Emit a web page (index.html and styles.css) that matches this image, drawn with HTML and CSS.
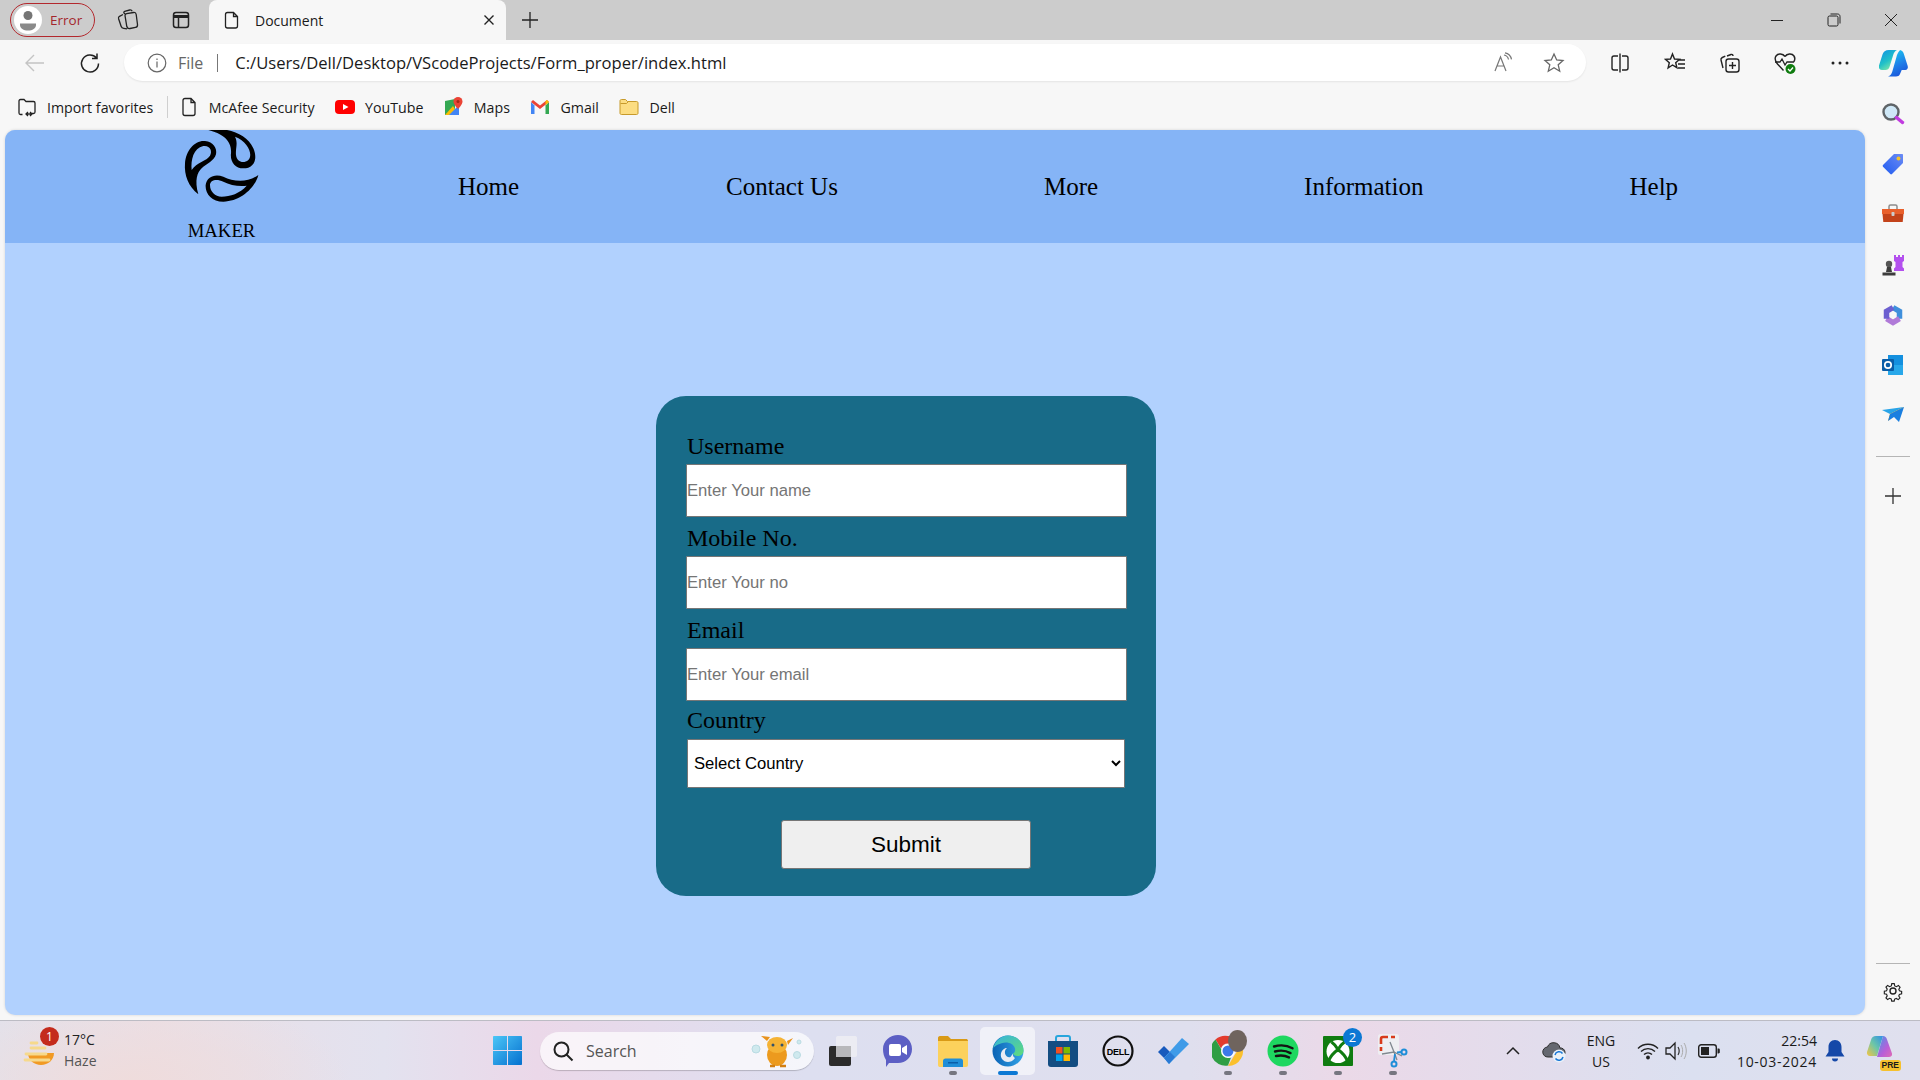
FILE: index.html
```html
<!DOCTYPE html>
<html lang="en">
<head>
  <meta charset="UTF-8" />
  <title>Document</title>
  <link rel="stylesheet" href="styles.css">
</head>
<body>

<div class="tabbar">
  <div class="profile">
    <span class="avatar">
      <svg width="24" height="24" viewBox="0 0 24 24"><circle cx="12" cy="7.500" r="4.500" fill="#757575"/><path d="M4 15.500h16v1.500c0 3.500-3.500 5.500-8 5.500s-8-2-8-5.500z" fill="#8a8a8a"/></svg>
    </span>
    <span>Error</span>
  </div>
  <div class="tab-btn first">
    <svg width="24" height="24" viewBox="0 0 24 24" fill="none" stroke="#222" stroke-width="1.300"><path d="M9 7.500c.1-1 .7-1.600 1.600-1.800l7-1.200c1.400-.2 2.400.6 2.600 2l1.300 10c.2 1.500-.7 2.600-2 2.800l-5.500 1.200c-1.500.3-2.800-.6-3.200-2z"/><path d="M9.200 6l-1-.8c-.8-.6-.3-1.600.5-1.900l5-1.300c1-.2 2 .1 2.500 1.200"/><path d="M7 6.500l-3.500 1.800c-.9.5-1.200 1.400-.9 2.400l2.500 7.500c.4 1.200 1.400 2 2.600 2.100l3.300.5"/></svg>
  </div>
  <div class="tab-btn">
    <svg width="20" height="20" viewBox="0 0 20 20" fill="none" stroke="#222" stroke-width="1.500"><rect x="2.500" y="2.500" width="15" height="15" rx="2.500"/><path d="M2.500 6.500h15" stroke-width="3"/><path d="M7.500 6.500v11"/></svg>
  </div>
  <div class="tab">
    <svg width="20" height="20" viewBox="0 0 20 20" fill="none" stroke="#222" stroke-width="1.300"><path d="M5.500 2.500h6l4 4v9.500c0 1.200-1 2-2 2h-8c-1 0-2-.8-2-2v-11.500c0-1.200 1-2 2-2zM11.500 2.500v4h4"/></svg>
    <span class="tab-title">Document</span>
    <svg class="tab-close" width="12" height="12" viewBox="0 0 12 12" stroke="#222" stroke-width="1.400"><path d="M1.500 1.500l9 9M10.500 1.500l-9 9"/></svg>
  </div>
  <div class="new-tab">
    <svg width="18" height="18" viewBox="0 0 18 18" stroke="#222" stroke-width="1.300"><path d="M9 1v16M1 9h16"/></svg>
  </div>
  <div class="win-controls">
    <div class="win-btn"><svg width="14" height="14" viewBox="0 0 14 14" stroke="#222"><path d="M1 7.500h12"/></svg></div>
    <div class="win-btn"><svg width="14" height="14" viewBox="0 0 14 14" fill="none" stroke="#222"><rect x="1" y="3" width="10" height="10" rx="1.500"/><path d="M3.500 1h7c1.500 0 2.500 1 2.500 2.500v7"/></svg></div>
    <div class="win-btn"><svg width="14" height="14" viewBox="0 0 14 14" stroke="#222"><path d="M1 1l12 12M13 1l-12 12"/></svg></div>
  </div>
</div>

<div class="toolbar">
  <div class="tool-btn"><svg width="22" height="22" viewBox="0 0 22 22" fill="none" stroke="#c4c4c4" stroke-width="1.400"><path d="M20 11h-18M10 3l-8 8 8 8"/></svg></div>
  <div class="tool-btn"><svg width="22" height="22" viewBox="0 0 22 22" fill="none" stroke="#222" stroke-width="1.500"><path d="M17.500 6a8.500 8.500 0 1 0 2 5.500M18 1.500v5h-5"/></svg></div>
  <div class="address">
    <svg width="20" height="20" viewBox="0 0 20 20" fill="none" stroke="#666" stroke-width="1.200"><circle cx="10" cy="10" r="8.800"/><path d="M10 8.500v6M10 5.500v1.500"/></svg>
    <span class="addr-file">File</span>
    <span class="addr-sep"></span>
    <span class="addr-url">C:/Users/Dell/Desktop/VScodeProjects/Form_proper/index.html</span>
    <div class="addr-icons">
      <div class="addr-btn"><svg width="22" height="22" viewBox="0 0 22 22" fill="none" stroke="#777" stroke-width="1.200"><path d="M2 19l5.500-14 5.500 14M4 14h7"/><path d="M11 3c2.500.5 4 2 4.500 4.500M12 .8c3.500.6 5.800 3 6.500 6.500"/></svg></div>
      <div class="addr-btn"><svg width="22" height="22" viewBox="0 0 22 22" fill="none" stroke="#666" stroke-width="1.300"><path d="M11 2l2.700 6 6.300.6-4.800 4.200 1.500 6.400-5.700-3.400-5.700 3.400 1.500-6.400-4.800-4.200 6.300-.6z"/></svg></div>
    </div>
  </div>
  <div class="tool-group">
    <div class="tool-btn"><svg width="22" height="22" viewBox="0 0 22 22" fill="none" stroke="#222" stroke-width="1.400"><path d="M9 4h-4c-1.200 0-2 .8-2 2v10c0 1.200.8 2 2 2h4M13 4h4c1.200 0 2 .8 2 2v10c0 1.200-.8 2-2 2h-4M11 1.500v19"/></svg></div>
    <div class="tool-btn"><svg width="22" height="22" viewBox="0 0 22 22" fill="none" stroke="#222" stroke-width="1.400"><path d="M8.500 2l2 5 5 .4-3.800 3.300 1.200 5-4.400-2.700-4.400 3 1.200-5.300-3.800-3.300 5-.4zM14 8h7M14 12h7M14 16h7"/></svg></div>
    <div class="tool-btn"><svg width="22" height="22" viewBox="0 0 22 22" fill="none" stroke="#222" stroke-width="1.400"><rect x="7" y="7" width="13" height="13" rx="2.500"/><path d="M13.500 10v7M10 13.500h7M8 4l4-1.500c1-.3 2 .2 2 1.500M4 16l-2-8c-.3-1.200.3-2 1.300-2.500l3-1.300"/></svg></div>
    <div class="tool-btn"><svg width="24" height="24" viewBox="0 0 24 24"><path d="M12 5.500c-2-3-7-3.500-9-.5-1.800 2.700-.5 5.500 1.500 8l6 6.500" fill="none" stroke="#222" stroke-width="1.400"/><path d="M12 5.500c2-3 7-3.500 9-.5 1.200 1.800 1 4-.2 6" fill="none" stroke="#222" stroke-width="1.400"/><path d="M2 11h5l2-3 3 6 2-3h7" fill="none" stroke="#222" stroke-width="1.300"/><circle cx="17.500" cy="18" r="5" fill="#107c10"/><path d="M15 18l2 2 3-3.500" fill="none" stroke="#fff" stroke-width="1.300"/></svg></div>
    <div class="tool-btn"><svg width="20" height="6" viewBox="0 0 20 6" fill="#222"><circle cx="3" cy="3" r="1.500"/><circle cx="10" cy="3" r="1.500"/><circle cx="17" cy="3" r="1.500"/></svg></div>
    <div class="tool-btn tool-copilot"><svg width="30" height="30" viewBox="0 0 30 30"><defs><linearGradient id="cpa" x1="0" y1="0" x2=".6" y2="1"><stop offset="0" stop-color="#0f8fe6"/><stop offset=".6" stop-color="#20c0c8"/><stop offset="1" stop-color="#7fe8a8"/></linearGradient><linearGradient id="cpb" x1=".3" y1="0" x2=".7" y2="1"><stop offset="0" stop-color="#18c8f0"/><stop offset=".55" stop-color="#1f7fe8"/><stop offset="1" stop-color="#1a50d8"/></linearGradient></defs><path d="M10 2h8c-2 1-3 2.500-3.800 5l-3.700 12c-.6 1.800-2 3-4 3h-3.500c-2.500 0-3.700-2-3-4.500l3.500-11c.7-2.700 3-4.500 6.500-4.500z" fill="url(#cpa)"/><path d="M20 2c2.600 0 4 1.500 4.700 3.500l4 12.500c.7 2.300-.5 4-2.500 4h-3.500l-1.700 4c-.8 1.800-2.200 2.500-4 2.500h-8c2.300-.8 3.500-2.300 4.300-5l4-14c.8-3.500 2.200-6 4-7.500z" fill="url(#cpb)"/></svg></div>
  </div>
</div>

<div class="middle">
  <div class="browser-col">
    <div class="favbar">
      <div class="fav fav-import">
        <svg width="20" height="20" viewBox="0 0 20 20" fill="none" stroke="#222" stroke-width="1.300"><path d="M2 16v-12c0-1 .6-1.500 1.500-1.500h3.500l2 2h7.500c1 0 1.500.6 1.500 1.500v9c0 1-.5 1.500-1.500 1.500h-2M9 17h6M11 15l-2 2 2 2M13 15l2 2-2 2M2 16c0 1 .6 1.500 1.500 1.500h2"/></svg>
        <span>Import favorites</span>
      </div>
      <span class="fav-sep"></span>
      <div class="fav">
        <svg width="20" height="20" viewBox="0 0 20 20" fill="none" stroke="#222" stroke-width="1.300"><path d="M6 1.500h6l4 4v11c0 1.200-.8 2-2 2h-8c-1.200 0-2-.8-2-2v-13c0-1.200.8-2 2-2zM12 1.500v4h4"/></svg>
        <span>McAfee Security</span>
      </div>
      <div class="fav">
        <svg width="20" height="20" viewBox="0 0 20 20"><rect x="0" y="3" width="20" height="14" rx="4" fill="#f00"/><path d="M8 7l5.500 3-5.500 3z" fill="#fff"/></svg>
        <span>YouTube</span>
      </div>
      <div class="fav">
        <svg width="20" height="20" viewBox="0 0 20 20"><path d="M1 4l10-2v16h-10z" fill="#34a853"/><path d="M1 18l8-9 6 9z" fill="#fbbc04"/><path d="M5 18l10-10v10z" fill="#4285f4"/><path d="M14 0a4.500 4.500 0 0 1 4.500 4.500c0 3-4.500 7.500-4.500 7.500s-4.500-4.500-4.500-7.500a4.500 4.500 0 0 1 4.500-4.500z" fill="#ea4335"/><circle cx="14" cy="4.500" r="1.500" fill="#a52714"/></svg>
        <span>Maps</span>
      </div>
      <div class="fav">
        <svg width="20" height="20" viewBox="0 0 20 20"><path d="M1 5v12h3.500v-8.500z" fill="#4285f4"/><path d="M19 5v12h-3.500v-8.500z" fill="#34a853"/><path d="M1 5l9 7 9-7-2-2-7 5.500-7-5.500z" fill="#ea4335"/><path d="M17 3l2 2-3.500 3v-3.800z" fill="#fbbc04"/></svg>
        <span>Gmail</span>
      </div>
      <div class="fav">
        <svg width="20" height="20" viewBox="0 0 20 20"><path d="M1 4c0-1 .6-1.500 1.500-1.500h4l2 2h9c1 0 1.500.6 1.500 1.500v10c0 1-.5 1.500-1.500 1.500h-15c-1 0-1.500-.5-1.500-1.500z" fill="#fcdd82" stroke="#c79a2b"/><path d="M1.500 6.500h6l2-2" fill="none" stroke="#c79a2b"/></svg>
        <span>Dell</span>
      </div>
    </div>

    <div class="page">
      <header class="site-header">
        <div class="logo">
          <svg class="logo-mark" width="120" height="80" viewBox="0 15 360 240">
            <path fill-rule="evenodd" d="M115 208C85 185 72 150 75 115 78 75 105 45 135 48 160 50 172 70 168 88 163 108 140 115 125 130 112 143 103 165 115 208ZM95 135C92 105 100 70 130 63 150 60 158 78 150 92 140 108 110 112 95 135Z"/>
            <path fill-rule="evenodd" d="M145 15C200 5 260 25 280 70 295 105 280 130 250 130 225 130 210 110 213 85 215 60 205 30 145 15ZM225 35C265 50 280 90 265 105 250 118 230 110 228 90 226 70 235 55 225 35Z"/>
            <path fill-rule="evenodd" d="M295 150C285 190 240 230 190 230 155 230 135 205 137 180 140 155 165 145 190 155 220 170 260 175 295 150ZM150 180C150 165 170 160 190 170 210 180 235 185 260 182 240 205 210 215 185 215 165 215 150 200 150 180Z"/>
          </svg>
          <span class="logo-text">MAKER</span>
        </div>
        <nav class="site-nav">
          <a>Home</a>
          <a>Contact Us</a>
          <a>More</a>
          <a>Information</a>
          <a>Help</a>
        </nav>
      </header>

      <form class="card">
        <label>Username</label>
        <input type="text" placeholder="Enter Your name" />
        <label>Mobile No.</label>
        <input type="text" placeholder="Enter Your no" />
        <label>Email</label>
        <input type="text" placeholder="Enter Your email" />
        <label class="label-country">Country</label>
        <select>
          <option>Select Country</option>
        </select>
        <button type="button">Submit</button>
      </form>
    </div>
  </div>

  <aside class="sidebar">
    <div class="side-btn"><svg width="24" height="24" viewBox="0 0 24 24"><circle cx="10" cy="10" r="7.500" fill="#cfe8f7" stroke="#5f6468" stroke-width="2.400"/><path d="M15.500 15.500l6 5" stroke="#c13be0" stroke-width="3.500" stroke-linecap="round"/></svg></div>
    <div class="side-btn"><svg width="24" height="24" viewBox="0 0 24 24"><defs><linearGradient id="tag" x1="1" y1="0" x2="0" y2="1"><stop offset="0" stop-color="#6c8cf5"/><stop offset="1" stop-color="#1f5bf0"/></linearGradient></defs><path d="M13 2h8c.6 0 1 .4 1 1v8l-11 11c-.5.500-1.200.5-1.700 0l-7.300-7.300c-.5-.5-.5-1.200 0-1.700z" fill="url(#tag)"/><circle cx="17.500" cy="6.500" r="2" fill="#f2c12e"/></svg></div>
    <div class="side-btn"><svg width="24" height="24" viewBox="0 0 24 24"><path d="M8 7v-2.500c0-1 .6-1.500 1.500-1.500h5c1 0 1.500.5 1.500 1.500v2.500" fill="none" stroke="#8c8c8c" stroke-width="1.500"/><path d="M1 7h22v5h-22z" fill="#e9602c"/><path d="M1.500 12h21l-.8 8h-19.400z" fill="#c3431a"/><rect x="10.500" y="10" width="3" height="4" rx=".8" fill="#ccc"/></svg></div>
    <div class="side-btn"><svg width="24" height="24" viewBox="0 0 24 24"><circle cx="8" cy="11" r="3.200" fill="#555"/><path d="M6 14h4l1 5h-6zM1.500 19.500h13v3h-13z" fill="#3c3c3c"/><path d="M13 2h2v2h2v-2h2v2h2v-2h2v6l-1.500 1v5l1.500 1.500v2.500h-10v-2.500l1.500-1.500v-5l-1.500-1z" fill="#b350ee"/></svg></div>
    <div class="side-btn"><svg width="24" height="24" viewBox="0 0 24 24" fill="none" stroke-width="5.500"><path d="M12 4.500l6.500 3.800v7.400" stroke="#3f8fdc"/><path d="M18.500 15.700l-6.500 3.800-6.500-3.800" stroke="#b07ad8"/><path d="M5.500 15.700v-7.400l6.500-3.800" stroke="#6c5fd0"/></svg></div>
    <div class="side-btn"><svg width="24" height="24" viewBox="0 0 24 24"><rect x="7" y="2" width="15" height="10" fill="#1490df"/><path d="M7 12h15v10h-15z" fill="#28a8ea"/><rect x="1" y="6" width="12" height="12" rx="1" fill="#0a5ea8"/><circle cx="7" cy="12" r="3.200" fill="none" stroke="#fff" stroke-width="1.700"/></svg></div>
    <div class="side-btn"><svg width="24" height="24" viewBox="0 0 24 24"><path d="M1 7l22-3-14 7z" fill="#29a4e8"/><path d="M23 4l-14 7-2 7z" fill="#f0a818"/><path d="M23 4l-5 15-5-5-6 4 2-7z" fill="#1a7fe0"/></svg></div>
    <span class="side-sep"></span>
    <div class="side-btn side-plus"><svg width="16" height="16" viewBox="0 0 16 16" stroke="#333" stroke-width="1.300"><path d="M8 0v16M0 8h16"/></svg></div>
    <span class="side-sep side-sep-low"></span>
    <div class="side-btn"><svg width="22" height="22" viewBox="0 0 22 22" fill="none" stroke="#222" stroke-width="1.400"><circle cx="11" cy="11" r="3"/><path d="M9.500 2h3l.6 2.800 2 .9 2.500-1.500 2 2.200-1.500 2.400.8 2 2.600.7v3l-2.700.6-.8 2 1.500 2.400-2.100 2-2.400-1.500-2 .8-.6 2.600h-3l-.6-2.700-2-.8-2.400 1.500-2-2.100 1.500-2.400-.8-2-2.700-.6v-3l2.700-.6.8-2-1.500-2.400 2-2.100 2.500 1.500 2-.9z" transform="translate(2 2) scale(.82)"/></svg></div>
  </aside>
</div>

<footer class="taskbar">
  <div class="tb-left">
    <div class="weather-icon">
      <svg width="34" height="34" viewBox="0 0 34 34"><path d="M6 19h26c0 7-6 12-13 12s-13-5-13-12z" fill="#f19a24"/><path d="M9 9h6M9 14h14M4 20h20M3 26h24" stroke="#f6d98c" stroke-width="2.800" stroke-linecap="round"/></svg>
      <span class="badge badge-red">1</span>
    </div>
    <div class="weather-text">
      <div>17°C</div>
      <div class="weather-sub">Haze</div>
    </div>
  </div>
  <div class="tb-btn">
    <svg width="29" height="29" viewBox="0 0 29 29"><defs><linearGradient id="win" x1="0" y1="0" x2="1" y2="1"><stop offset="0" stop-color="#4cc6f7"/><stop offset="1" stop-color="#0570cf"/></linearGradient></defs><path d="M0 1c0-.6.400-1 1-1h13v14h-14zM15 0h13c.6 0 1 .4 1 1v13h-14zM0 15h14v14h-13c-.6 0-1-.4-1-1zM15 15h14v13c0 .6-.4 1-1 1h-13z" fill="url(#win)"/></svg>
  </div>
  <div class="search">
    <svg width="22" height="22" viewBox="0 0 22 22" fill="none" stroke="#222" stroke-width="2"><circle cx="9.500" cy="9.500" r="7"/><path d="M14.500 14.500l6 6"/></svg>
    <span class="search-text">Search</span>
    <svg class="search-art" width="52" height="36" viewBox="0 0 52 36"><circle cx="5" cy="16" r="4" fill="#cfe9ee" stroke="#b9dbe2"/><circle cx="46" cy="22" r="3.500" fill="#cfe9ee" stroke="#b9dbe2"/><circle cx="48" cy="9" r="2" fill="#cfe9ee" stroke="#b9dbe2"/><ellipse cx="26" cy="22" rx="10" ry="11" fill="#ec9a1e"/><ellipse cx="26" cy="12" rx="10" ry="8" fill="#f5b335"/><path d="M16 8l-6-5 9 1zM36 8l6-3-5 7z" fill="#e8921c"/><circle cx="22" cy="12" r="1.500" fill="#33526b"/><circle cx="31" cy="12" r="1.500" fill="#33526b"/><path d="M19 33h5M29 33h6" stroke="#d27f12" stroke-width="2.500"/></svg>
  </div>
  <div class="tb-apps">
    <div class="tb-btn"><svg width="30" height="32" viewBox="0 0 30 32"><rect x="1" y="11" width="22" height="20" rx="2" fill="#2b2b2b"/><rect x="8" y="1" width="21" height="21" rx="2" fill="#efeff3" opacity=".85"/><rect x="8" y="11" width="15" height="11" fill="#b8b8bb"/></svg></div>
    <div class="tb-btn"><svg width="30" height="34" viewBox="0 0 30 34"><path d="M15 1c8 0 14 6 14 14s-6 14-14 14h-9l-3 4v-7c-2-3-3-7-3-11 0-8 7-14 15-14z" fill="#5c5fc4"/><rect x="6" y="10" width="12" height="12" rx="2" fill="#fff"/><path d="M19 14l5-3v10l-5-3z" fill="#fff"/></svg></div>
    <div class="tb-btn">
      <svg width="30" height="32" viewBox="0 0 30 32"><path d="M0 3c0-1 .6-2 2-2h8l3 3h15c1 0 2 .6 2 2v3h-30z" fill="#d99a16"/><path d="M0 6h30v24c0 1-.6 2-2 2h-26c-1 0-2-.6-2-2z" fill="#fcd15c"/><path d="M5 26c0-1.500 1-2.500 2.500-2.500h15c1.500 0 2.500 1 2.500 2.500v6h-20z" fill="#1f8ed8"/><rect x="10" y="27" width="10" height="1.500" fill="#0a5ea8"/></svg>
      <span class="tb-dot"></span>
    </div>
    <div class="tb-btn tb-active">
      <svg width="32" height="32" viewBox="0 0 32 32"><defs><linearGradient id="edg" x1="0" y1="0" x2="1" y2="0"><stop offset="0" stop-color="#0b63b5"/><stop offset="1" stop-color="#33a5e8"/></linearGradient><linearGradient id="edg2" x1="0" y1="0" x2="1" y2="1"><stop offset="0" stop-color="#35b2e0"/><stop offset="1" stop-color="#5fdc7a"/></linearGradient></defs><circle cx="16" cy="16" r="15.500" fill="url(#edg)"/><path d="M1 14C3 5 10 .5 16 .5c9 0 15.500 7 15.500 15 0 3-2 5.500-6 5.500-2.500 0-4-1-4.500-2.500 2-1 2.500-3 2-5-1-4-5-6-9-6-6 0-12 4-13.500 6.500z" fill="url(#edg2)"/><path d="M21 18.500c-.5 2 .5 3.500 2 4.500-2 3-5 4-7 4-5 0-8-4.500-7-8.500 .5-3 3-5.500 6-5.500-1.500 1-2.500 3-2 5.500.7 3 3.500 4.500 5.500 3.500z" fill="#e9ecf4"/></svg>
      <span class="tb-dot tb-dot-blue"></span>
    </div>
    <div class="tb-btn"><svg width="30" height="32" viewBox="0 0 30 32"><path d="M8 7v-4c0-1 .6-2 2-2h10c1 0 2 1 2 2v4" fill="none" stroke="#27a5dc" stroke-width="2"/><path d="M0 6h30v23c0 2-1 3-3 3h-24c-2 0-3-1-3-3z" fill="#134d82"/><rect x="8" y="12" width="6.500" height="6.500" fill="#f25022"/><rect x="15.500" y="12" width="6.500" height="6.500" fill="#7fba00"/><rect x="8" y="19.500" width="6.500" height="6.500" fill="#00a4ef"/><rect x="15.500" y="19.500" width="6.500" height="6.500" fill="#ffb900"/></svg></div>
    <div class="tb-btn"><svg width="32" height="32" viewBox="0 0 32 32"><circle cx="16" cy="16" r="14.500" fill="none" stroke="#111" stroke-width="2.200"/><text x="16" y="19.500" text-anchor="middle" class="dell-word">DELL</text></svg></div>
    <div class="tb-btn"><svg width="32" height="28" viewBox="0 0 32 28"><path d="M1 15l6-6 6 6-6 6z" fill="#185abd"/><path d="M7 21l18-20 7 6-20 20z" fill="#3f9be8"/><path d="M7 21l6-6 5 5-6 7z" fill="#2a7ad4"/></svg></div>
    <div class="tb-btn">
      <svg width="32" height="32" viewBox="0 0 32 32"><path d="M16 1a15 15 0 0 1 13 7.500h-13a7.500 7.500 0 0 0-7 5l-5.500-9a15 15 0 0 1 12.500-3.500z" fill="#e33b2e"/><path d="M29 8.500a15 15 0 0 1-13 22.500l6.500-11a7.500 7.500 0 0 0 0-11.500z" fill="#fbc02d"/><path d="M3.500 4.500l6.500 11a7.500 7.500 0 0 0 9 7l-3 8a15 15 0 0 1-12.500-26z" fill="#2f9e44"/><circle cx="16" cy="16" r="7" fill="#fff"/><circle cx="16" cy="16" r="5.500" fill="#3c78e8"/></svg>
      <span class="chrome-user"></span>
      <span class="tb-dot"></span>
    </div>
    <div class="tb-btn">
      <svg width="32" height="32" viewBox="0 0 32 32" fill="none"><circle cx="16" cy="16" r="15.500" fill="#1ed760"/><path d="M7 11.500c6-1.800 13-1.300 18.500 1.800M8 16.500c5-1.400 11-1 15.500 1.600M9 21c4.500-1 9-.7 13 1.400" stroke="#141414" stroke-width="2.400" stroke-linecap="round"/></svg>
      <span class="tb-dot"></span>
    </div>
    <div class="tb-btn">
      <svg width="30" height="30" viewBox="0 0 30 30" fill="none"><rect width="30" height="30" rx="1" fill="#107c10"/><circle cx="15" cy="15.500" r="11.500" fill="#fff"/><path d="M8.500 6c3 2 5 5 6.500 7.500 1.500-2.500 3.500-5.500 6.500-7.500M6 24c2-4.500 5-7.500 9-10.500 4 3 7 6 9 10.500" stroke="#107c10" stroke-width="3"/></svg>
      <span class="badge badge-blue">2</span>
      <span class="tb-dot"></span>
    </div>
    <div class="tb-btn">
      <svg width="30" height="34" viewBox="0 0 30 34" fill="none"><rect x="0" y="0" width="21" height="21" rx="2.500" fill="#eeeef2"/><path d="M3 10v-5a2 2 0 0 1 2-2h5M13 3h4M3 13v4" stroke="#d83b1c" stroke-width="2.600"/><path d="M12 8l4 10 8 4M4 20l12-2 3 8" stroke="#808890" stroke-width="1.300"/><circle cx="26" cy="18" r="2.500" stroke="#1f8ed8" stroke-width="2"/><circle cx="16" cy="30" r="2.500" stroke="#1f8ed8" stroke-width="2"/><path d="M17 20l-1 7M19 18.500l4.500-.5" stroke="#1f8ed8" stroke-width="1.800"/></svg>
      <span class="tb-dot"></span>
    </div>
  </div>
  <div class="tray">
    <div class="tray-item tray-chev"><svg width="14" height="9" viewBox="0 0 14 9" fill="none" stroke="#222" stroke-width="1.500"><path d="M1 8l6-6 6 6"/></svg></div>
    <div class="tray-item tray-cloud"><svg width="24" height="24" viewBox="0 0 24 24"><path d="M6 18a5 5 0 0 1-.5-10 6.500 6.500 0 0 1 12.500 1 4.500 4.500 0 0 1 1 9z" fill="#656870" stroke="#2e2e2e" stroke-width="1"/><circle cx="17" cy="17" r="6.500" fill="#e9f1fa"/><path d="M13 16a4.200 4.200 0 0 1 7.500-1.500M21 18a4.200 4.200 0 0 1-7.500 1.500" fill="none" stroke="#1877d6" stroke-width="1.500"/></svg></div>
    <div class="tray-item tray-lang"><div>ENG</div><div>US</div></div>
    <div class="tray-item tray-wifi"><svg width="22" height="18" viewBox="0 0 22 18" fill="none" stroke="#222" stroke-width="1.400"><path d="M1 6.500a14 14 0 0 1 20 0M4 9.500a10 10 0 0 1 14 0M7 12.500a6 6 0 0 1 8 0"/><circle cx="11" cy="15.500" r="1.200" fill="#222"/></svg></div>
    <div class="tray-item tray-vol"><svg width="24" height="22" viewBox="0 0 24 22" fill="none"><path d="M1 8h4l5-5v16l-5-5h-4z" stroke="#222" stroke-width="1.300"/><path d="M13 7c1.500 2.500 1.500 5.500 0 8" stroke="#333" stroke-width="1.200"/><path d="M16 5c2.200 3.500 2.200 8.500 0 12M19 3c3 4.500 3 11.500 0 16" stroke="#aaa" stroke-width="1"/></svg></div>
    <div class="tray-item tray-batt"><svg width="22" height="14" viewBox="0 0 22 14"><rect x=".7" y=".7" width="17.600" height="12.600" rx="2.500" fill="none" stroke="#222" stroke-width="1.400"/><rect x="3" y="3" width="8" height="8" fill="#222"/><path d="M19.500 4.500h1c.8 0 1.300.5 1.300 1.200v2.600c0 .7-.5 1.200-1.300 1.200h-1z" fill="#222"/></svg></div>
    <div class="tray-item tray-clock"><div>22:54</div><div class="clock-date">10-03-2024</div></div>
    <div class="tray-item tray-bell"><svg width="20" height="24" viewBox="0 0 20 24" fill="#1548a8"><path d="M10 1c4 0 6.500 3 6.500 7v5l3 4.500h-19l3-4.500v-5c0-4 2.500-7 6.500-7z"/><path d="M7 19.500h6a3 3 0 0 1-6 0z"/></svg></div>
    <div class="tray-item tray-copilot">
      <svg width="30" height="32" viewBox="0 0 30 32"><defs><linearGradient id="cpc" x1="0" y1="1" x2="1" y2="0"><stop offset="0" stop-color="#f5c542"/><stop offset=".5" stop-color="#6cc6a8"/><stop offset="1" stop-color="#2f8fe8"/></linearGradient><linearGradient id="cpd" x1="0" y1="0" x2="1" y2="1"><stop offset="0" stop-color="#3f9be8"/><stop offset=".6" stop-color="#b75fd8"/><stop offset="1" stop-color="#e06cb4"/></linearGradient></defs><path d="M10 1h7l-6 20h-7c-2 0-3.500-2-3-4l4-12c.6-2.500 2.500-4 5-4z" fill="url(#cpc)"/><path d="M17 1c2 0 3.500 1.500 4 3.500l5 14c.5 2-1 3.500-3 3.500h-12z" fill="url(#cpd)"/></svg>
      <span class="pre-tag">PRE</span>
    </div>
  </div>
</footer>

</body>
</html>
```

FILE: styles.css
```css
* {
  box-sizing: border-box;
}

html, body {
  margin: 0;
  height: 100%;
}

body {
  width: 1920px;
  height: 1080px;
  overflow: hidden;
  display: flex;
  flex-direction: column;
  background: #f7f7f7;
  color: #1a1a1a;
  font-family: "Open Sans", sans-serif;
}

/* browser tabs */
.tabbar {
  height: 40px;
  flex: none;
  display: flex;
  align-items: center;
  background: #cccccc;
}

.profile {
  width: 85px;
  height: 34px;
  margin-left: 10px;
  padding-left: 3px;
  display: flex;
  align-items: center;
  gap: 8px;
  border: 1.5px solid #b3282d;
  border-radius: 17px;
  color: #a4262c;
  font-size: 13.5px;
}

.avatar {
  width: 28px;
  height: 28px;
  display: flex;
  align-items: center;
  justify-content: center;
  background: #fff;
  border-radius: 50%;
}

.tab-btn {
  width: 53px;
  display: flex;
  justify-content: center;
}

.tab-btn.first {
  margin-left: 6px;
}

.tab {
  width: 297px;
  height: 40px;
  margin-left: 2px;
  padding: 0 11px 0 13px;
  display: flex;
  align-items: center;
  background: #f7f7f7;
  border-radius: 8px 8px 0 0;
  font-size: 14px;
}

.tab-title {
  margin-left: 13px;
}

.tab-close {
  margin-left: auto;
}

.new-tab {
  width: 48px;
  display: flex;
  justify-content: center;
}

.win-controls {
  margin-left: auto;
  padding-right: 1px;
  display: flex;
}

.win-btn {
  width: 57px;
  display: flex;
  justify-content: center;
}

/* address row */
.toolbar {
  height: 46px;
  flex: none;
  padding-left: 8px;
  display: flex;
  align-items: center;
  background: #f7f7f7;
}

.tool-btn {
  width: 55px;
  display: flex;
  justify-content: center;
  align-items: center;
}

.tool-copilot {
  width: 53px;
}

.address {
  width: 1463px;
  height: 37px;
  margin-left: 6px;
  margin-top: -1px;
  padding: 0 7px 0 23px;
  display: flex;
  align-items: center;
  background: #fff;
  border-radius: 19px;
  box-shadow: 0 1px 2px rgba(0,0,0,0.08);
  font-size: 16px;
}

.addr-file {
  margin-left: 11px;
  color: #666;
}

.addr-sep {
  width: 1px;
  height: 18px;
  margin: 0 17px 0 14px;
  background: #777;
}

.addr-url {
  color: #1a1a1a;
  font-size: 16.6px;
}

.addr-icons {
  margin-left: auto;
  display: flex;
}

.addr-btn {
  width: 50px;
  display: flex;
  justify-content: center;
}

.tool-group {
  margin-left: 6px;
  display: flex;
}

/* favorites + page + sidebar */
.middle {
  flex: 1;
  display: flex;
  min-height: 0;
}

.browser-col {
  width: 1865px;
  display: flex;
  flex-direction: column;
  padding: 0 0 5px 5px;
}

.favbar {
  height: 44px;
  flex: none;
  padding: 0 0 2px 12px;
  display: flex;
  align-items: center;
  gap: 20.5px;
  font-size: 14.2px;
}

.fav {
  display: flex;
  align-items: center;
  gap: 10px;
}

.fav-sep {
  width: 1px;
  height: 22px;
  margin: 0 -9.5px 0 -7px;
  background: #cfcfcf;
}

.page {
  flex: 1;
  background: #b1d1fe;
  border-radius: 10px;
  overflow: hidden;
  box-shadow: 0 0 3px rgba(0,0,0,0.15);
  font-family: "Liberation Serif", serif;
  color: #000;
}

.site-header {
  height: 113px;
  display: flex;
  background: #85b4f6;
}

.logo {
  width: 120px;
  margin-left: 156px;
  display: flex;
  flex-direction: column;
  align-items: center;
}

.logo-mark {
  margin-left: -2px;
}

.logo-text {
  margin-top: 10px;
  padding-left: 1px;
  font-size: 18.75px;
  line-height: 22px;
}

.site-nav {
  margin-left: 177px;
  display: flex;
  align-items: center;
  gap: 206px;
  font-size: 25px;
}

.site-nav a:first-child {
  margin-right: 1px;
}

.card {
  width: 500px;
  height: 500px;
  margin: 153px 0 0 651px;
  padding: 29px 30px 0;
  background: #186b88;
  border-radius: 30px;
  display: flex;
  flex-direction: column;
}

.card label {
  height: 39px;
  padding: 4.5px 0 0 1px;
  font-size: 24px;
  line-height: 33px;
}

.card input {
  width: 441px;
  height: 53px;
  flex: none;
  padding: 0;
  border: 1px solid #767676;
  background: #fff;
  font-family: "Liberation Sans", sans-serif;
  font-size: 16.67px;
  border-radius: 1px;
}

.card input::placeholder {
  color: #757575;
}

.card .label-country {
  height: 38px;
  padding-top: 3px;
}

.card select {
  width: 438px;
  height: 49px;
  flex: none;
  margin-left: 1px;
  padding: 0 0 0 2px;
  border: 1px solid #767676;
  background: #fff;
  border-radius: 1px;
  font-family: "Liberation Sans", sans-serif;
  font-size: 16.67px;
}

.card button {
  width: 250px;
  height: 49px;
  flex: none;
  margin: 32px 0 0 95px;
  border: 1px solid #767676;
  border-radius: 3px;
  background: #efefef;
  font-family: "Liberation Sans", sans-serif;
  font-size: 22.5px;
  color: #000;
}

.sidebar {
  width: 55px;
  padding: 3px 0 4px;
  display: flex;
  flex-direction: column;
  align-items: center;
}

.side-btn {
  height: 50.2px;
  flex: none;
  display: flex;
  align-items: center;
  justify-content: center;
}

.side-plus {
  margin-top: -1px;
}

.side-sep {
  width: 34px;
  height: 1px;
  margin: 16px 0 15px;
  background: #b5b5b5;
}

.side-sep-low {
  margin: auto 0 2px;
}

/* windows taskbar */
.taskbar {
  height: 60px;
  flex: none;
  display: flex;
  align-items: center;
  border-top: 1px solid #bcbcc4;
  background:
    radial-gradient(ellipse 220px 90px at 130px 60px, #efdcdc, transparent),
    linear-gradient(90deg, #e2e2ec 0, #eadfe6 8%, #e3e2ef 20%, #ebd8e9 28%, #dddff0 42%, #dfdfee 62%, #ebd9e8 70%, #dbe0f0 88%, #e0e0ee 100%);
}

.tb-left {
  width: 480px;
  padding-left: 22px;
  display: flex;
  align-items: center;
  gap: 8px;
}

.weather-icon {
  width: 34px;
  height: 34px;
  position: relative;
}

.weather-text {
  margin-top: -2px;
  font-size: 14px;
  line-height: 21px;
  color: #222;
}

.weather-sub {
  color: #555;
}

.badge {
  position: absolute;
  border-radius: 50%;
  color: #fff;
  display: flex;
  align-items: center;
  justify-content: center;
}

.badge-red {
  width: 19px;
  height: 19px;
  top: -7px;
  right: -3px;
  background: #c42b1c;
  font-size: 12px;
}

.badge-blue {
  width: 19px;
  height: 19px;
  top: 1px;
  right: 3px;
  background: #0c78d4;
  font-size: 13px;
}

.tb-btn {
  width: 55px;
  height: 48px;
  flex: none;
  position: relative;
  display: flex;
  align-items: center;
  justify-content: center;
}

.search {
  width: 274px;
  height: 38px;
  margin-left: 5px;
  padding-left: 12px;
  display: flex;
  align-items: center;
  background: rgba(255,255,255,0.7);
  border-radius: 19px;
  box-shadow: 0 1px 1px rgba(0,0,0,0.2);
}

.search-text {
  margin-left: 12px;
  color: #555;
  font-size: 16px;
}

.search-art {
  margin-left: auto;
  margin-right: 11px;
}

.tb-apps {
  margin-left: 1px;
  display: flex;
}

.tb-active {
  background: rgba(255,255,255,0.55);
  border-radius: 5px;
}

.tb-dot {
  position: absolute;
  width: 8px;
  height: 4px;
  left: 50%;
  bottom: 0;
  margin-left: -4px;
  background: #767680;
  border-radius: 2px;
}

.tb-dot-blue {
  width: 20px;
  margin-left: -10px;
  background: #0c78d4;
}

.dell-word {
  font-family: "Liberation Sans", sans-serif;
  font-size: 9px;
  font-weight: 700;
  letter-spacing: -0.3px;
}

.chrome-user {
  position: absolute;
  width: 19px;
  height: 22px;
  top: 3px;
  right: 8px;
  background: #6f645e;
  border-radius: 50%;
}

.tray {
  margin-left: auto;
  padding-right: 11px;
  display: flex;
  align-items: center;
}

.tray-item {
  height: 48px;
  display: flex;
  align-items: center;
  justify-content: center;
}

.tray-chev { width: 40px; }
.tray-cloud { width: 42px; }
.tray-wifi { width: 30px; margin-left: 6px; }
.tray-vol { width: 28px; }
.tray-batt { width: 36px; }
.tray-bell { width: 36px; }

.tray-lang {
  width: 52px;
  flex-direction: column;
  font-size: 14px;
  line-height: 21px;
}

.tray-clock {
  width: 90px;
  flex-direction: column;
  align-items: flex-end;
  font-size: 14px;
  line-height: 21px;
  white-space: nowrap;
}

.clock-date {
  letter-spacing: 0.7px;
}

.tray-copilot {
  width: 56px;
  position: relative;
}

.pre-tag {
  position: absolute;
  right: 8px;
  bottom: 4px;
  padding: 0 2px;
  background: #f6c12e;
  border-radius: 3px;
  font-family: "Liberation Sans", sans-serif;
  font-size: 8.5px;
  font-weight: 700;
  line-height: 11px;
  color: #1a1a1a;
}
```
